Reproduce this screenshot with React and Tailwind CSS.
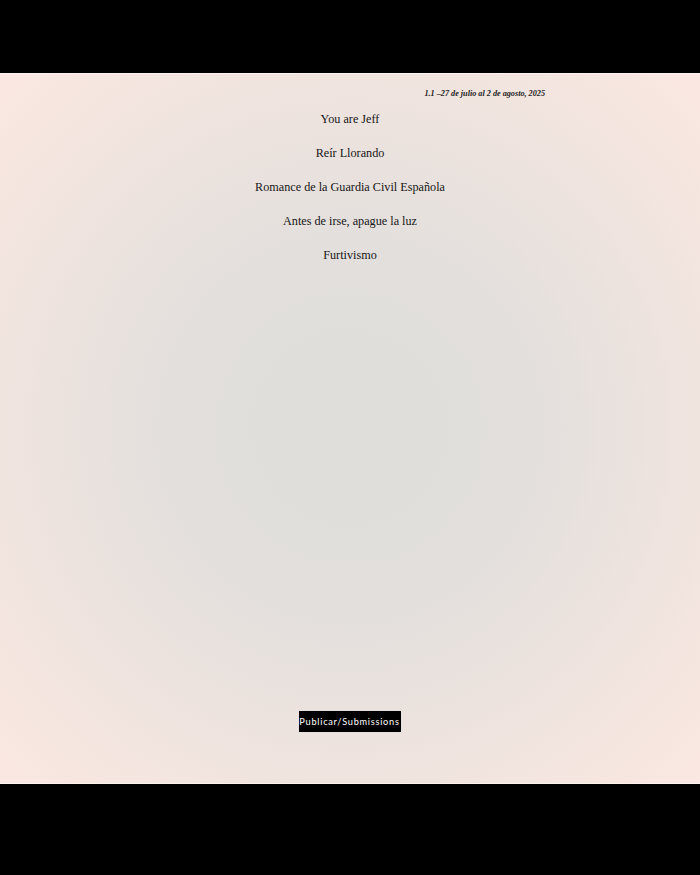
import React from 'react';

const titles = [
  'You are Jeff',
  'Reír Llorando',
  'Romance de la Guardia Civil Española',
  'Antes de irse, apague la luz',
  'Furtivismo',
];

export default function App() {
  return (
    <div className="w-[700px] h-[875px] bg-black flex flex-col">
      <div className="h-[73px] shrink-0" />
      <div className="h-[711px] shrink-0 border-t border-[#fdf3ee] border-b bg-[radial-gradient(ellipse_at_center,#dfdedb_0%,#e2dfdc_35%,#f0e4df_70%,#fbe7e1_100%)] flex flex-col items-center">
        <div className="w-[390px] flex justify-end pt-[14px]">
          <p className="text-[8.2px] italic font-bold text-[#222] font-['Liberation_Serif','DejaVu_Serif',serif]">
            1.1 –27 de julio al 2 de agosto, 2025
          </p>
        </div>
        <ul className="flex flex-col items-center gap-[17px] mt-[11px] font-['Liberation_Serif',serif] text-[12.2px] text-[#161616]">
          {titles.map((t) => (
            <li key={t} className="leading-[17px]">{t}</li>
          ))}
        </ul>
        <div className="flex-1" />
        <button className="mb-[50px] ml-[-1px] bg-black text-white h-[23px] w-[104px] text-[9.2px] font-normal tracking-[0.08em] font-['Lato',sans-serif] border border-[#e8e0dc]">
          Publicar/Submissions
        </button>
      </div>
      <div className="flex-1" />
    </div>
  );
}
